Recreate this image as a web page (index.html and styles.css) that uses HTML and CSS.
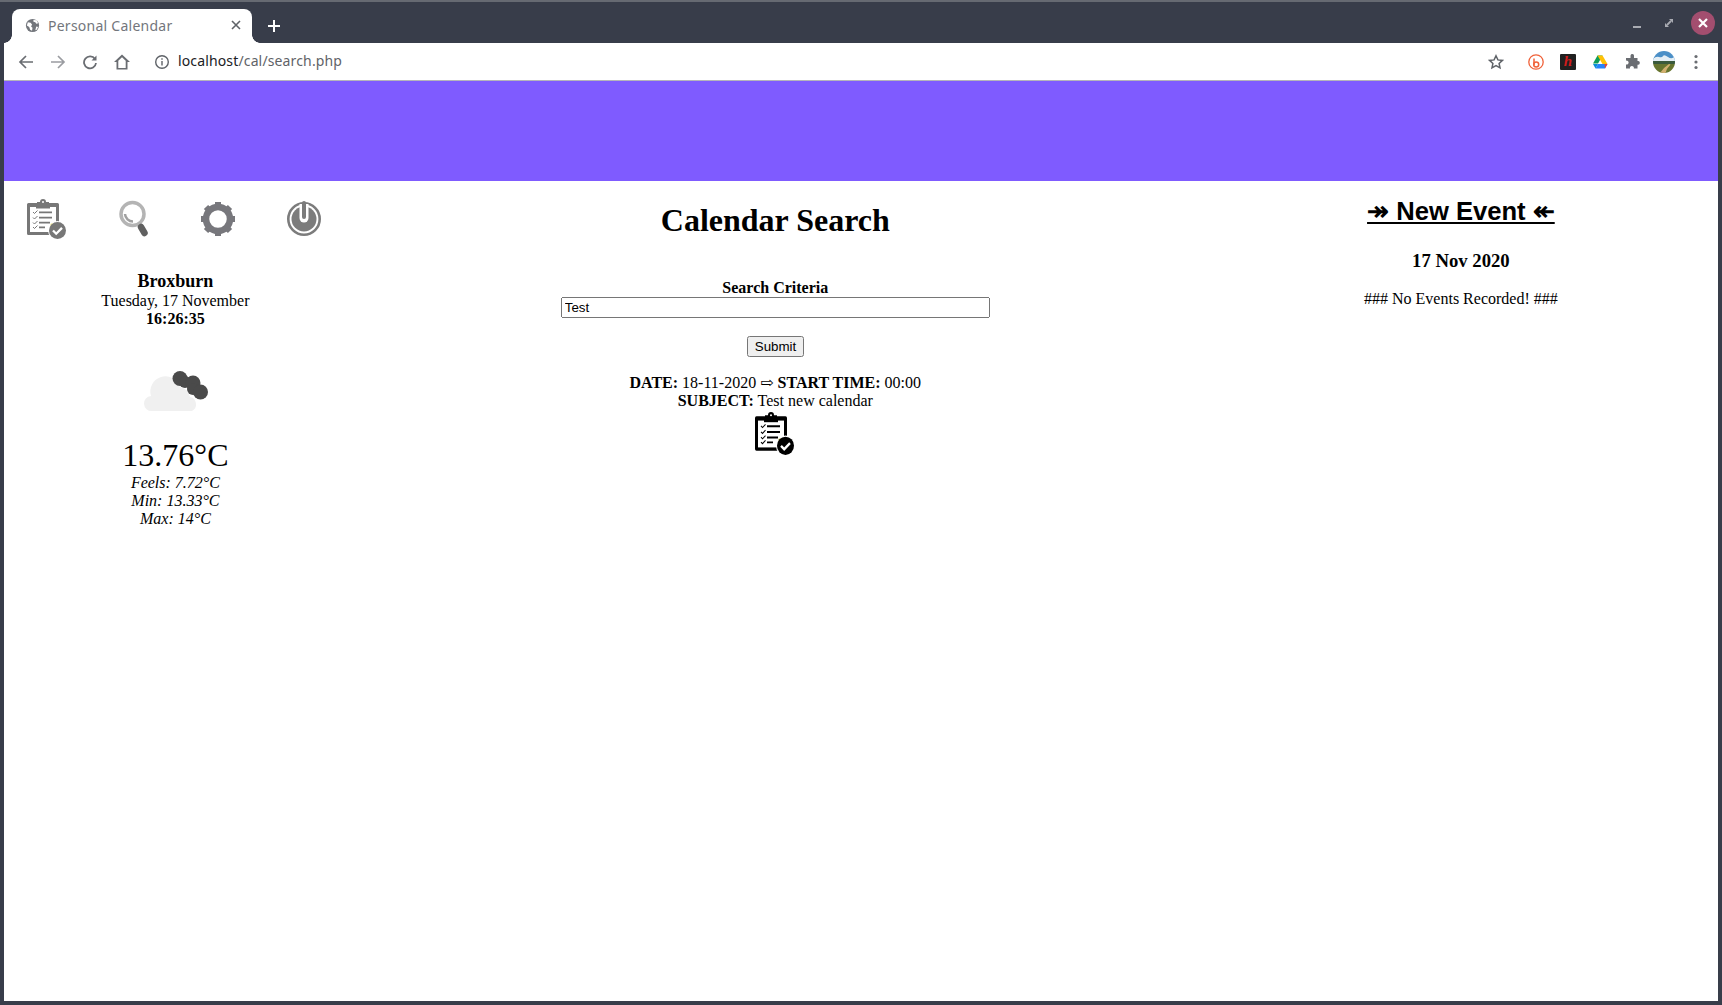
FILE: index.html
```html
<!DOCTYPE html>
<html lang="en">
<head>
  <meta charset="UTF-8" />
  <title>Personal Calendar</title>
  <link rel="stylesheet" href="styles.css">
</head>
<body>

<!-- clipboard icon, used in the left nav (grey) and in the result (black) -->
<svg class="sprite">
  <symbol id="clipboard" viewBox="0 0 40 41" preserveAspectRatio="none">
    <path d="M1.500 4H10V3h3a3 3 0 0 1 6 0h3v1h8.500A1.500 1.500 0 0 1 32 5.500v29a1.500 1.500 0 0 1-1.500 1.500h-29A1.500 1.500 0 0 1 0 34.500v-29A1.500 1.500 0 0 1 1.500 4z" fill="currentColor"/>
    <rect x="3" y="8" width="26" height="25" fill="#fff"/>
    <path d="M9 5h14v4.500H9z" fill="currentColor"/>
    <circle cx="16" cy="3" r="1" fill="#fff"/>
    <path d="M6 13l1.500 1.500 3-3M6 18.500l1.500 1.500 3-3M6 23.500l1.500 1.500 3-3M6 28l1.500 1.500 3-3" fill="none" stroke="currentColor"/>
    <path d="M12 13.300h13M12 18.700h13M12 23.700h11M12 28.300h6" stroke="currentColor" stroke-width="1.800"/>
    <circle cx="30.500" cy="31.500" r="9.500" fill="#fff"/>
    <circle cx="25" cy="26" r="1.800" fill="#f2eb9c"/>
    <circle cx="30.500" cy="31.500" r="8.500" fill="currentColor"/>
    <path d="M26 31.500l3.200 3.200 5.800-5.800" fill="none" stroke="#fff" stroke-width="2.300"/>
  </symbol>
</svg>

<div class="window">

  <div class="tabbar">
    <div class="tab">
      <svg class="favicon" viewBox="0 0 16 16"><circle cx="8" cy="8" r="7" fill="#73767c"/><path d="M3 4.500l3 .5 1.500 2-1 2 1.500 1.500-.5 3-2-1-1-3-2.500-1.500zM9 2l3.500.5 1.500 3-2 .5-1-1.500-2-.5zM12 9l2 .5-1.500 3-1.500.5z" fill="#fff"/></svg>
      <span class="tab-title">Personal Calendar</span>
      <svg class="tab-close" viewBox="0 0 10 10"><path d="M1 1l8 8M9 1l-8 8" stroke="#5f6368" stroke-width="1.600"/></svg>
    </div>
    <svg class="new-tab" viewBox="0 0 14 14"><path d="M7 1v12M1 7h12" stroke="#fff" stroke-width="2"/></svg>
    <div class="win-controls">
      <svg class="win-min" viewBox="0 0 8 2"><path d="M0 1h8" stroke="#a9abb2" stroke-width="2"/></svg>
      <svg class="win-max" viewBox="0 0 8 8"><path d="M4 0h4v4zM4 8H0V4z" fill="#a9abb2"/><path d="M2 6l4-4" stroke="#a9abb2" stroke-width="1.800"/></svg>
      <div class="win-close"><svg viewBox="0 0 10 10"><path d="M1 1l8 8M9 1l-8 8" stroke="#fff" stroke-width="2.200"/></svg></div>
    </div>
  </div>

  <div class="toolbar">
    <svg class="tool" viewBox="0 0 16 16"><path d="M15 8H2M8 2L2 8l6 6" fill="none" stroke="#6a6d72" stroke-width="1.700"/></svg>
    <svg class="tool" viewBox="0 0 16 16"><path d="M1 8h13M8 2l6 6-6 6" fill="none" stroke="#9a9ca1" stroke-width="1.700"/></svg>
    <svg class="tool" viewBox="0 0 16 16"><path d="M13 5A6 6 0 1 0 14 9" fill="none" stroke="#6a6d72" stroke-width="1.800"/><path d="M14.500 1.500v5h-5z" fill="#6a6d72"/></svg>
    <svg class="tool" viewBox="0 0 16 16"><path d="M8 .5L0 8h2.500v7.500h11V8H16zM4.300 14V6.800L8 3.200l3.700 3.600V14z" fill="#6a6d72" fill-rule="evenodd"/></svg>
    <svg class="info" viewBox="0 0 16 16"><circle cx="8" cy="8" r="6.300" fill="none" stroke="#5f6368" stroke-width="1.400"/><path d="M7.300 7h1.400v4.500H7.300zM7.300 4.300h1.400v1.400H7.300z" fill="#5f6368"/></svg>
    <div class="url"><span class="url-host">localhost</span>/cal/search.php</div>
    <svg class="ext star" viewBox="0 0 16 16"><path d="M8 1.800l1.900 4.100 4.500.5-3.300 3 .9 4.400L8 11.600l-4 2.200.9-4.400-3.300-3 4.500-.5z" fill="none" stroke="#5f6368" stroke-width="1.500"/></svg>
    <svg class="ext bitly" viewBox="0 0 16 16"><circle cx="8" cy="8" r="7.200" fill="none" stroke="#f0623a" stroke-width="1.300"/><path d="M6 4.500V11" stroke="#f0623a" stroke-width="1.500"/><circle cx="8.200" cy="10.500" r="2.500" fill="none" stroke="#f0623a" stroke-width="1.500"/></svg>
    <div class="ext hicon">h</div>
    <svg class="ext drive" viewBox="0 0 16 16"><path d="M5.500 1.500h5L6 9.500H1z" fill="#0f9d58"/><path d="M5.500 1.500h5l5 8.500h-5z" fill="#ffc107"/><path d="M3.500 14.500L6 10h9.500L13 14.500z" fill="#2684fc"/><path d="M13 14.500L15.500 10h-3z" fill="#ea4335"/><path d="M1 10h5l-2.500 4.500z" fill="#0b8cd9"/></svg>
    <svg class="ext puzzle" viewBox="0 0 16 16"><path d="M6.500 1.500a1.800 1.800 0 0 1 3.500 0V4h3.500v3a1.900 1.900 0 1 1 0 3.700V14.500H9.800a2 2 0 1 0-3.800 0H2v-4a2 2 0 1 0 0-3.800V4h4.500z" fill="#6a6d72"/></svg>
    <svg class="avatar" viewBox="0 0 22 22"><defs><clipPath id="round"><circle cx="11" cy="11" r="11"/></clipPath></defs><g clip-path="url(#round)"><rect width="22" height="11" fill="#4b8fc7"/><path d="M0 8q3-3 6-2t4-1 5 1 7-1v6H0z" fill="#e4eef5"/><rect y="10" width="22" height="3" fill="#3a5a3c"/><rect y="13" width="22" height="9" fill="#67752f"/><path d="M7 22q3-5 9-9l1.500.5q-4 4-5 8.500z" fill="#d2b06f"/></g></svg>
    <svg class="menu-dots" viewBox="0 0 4 16"><circle cx="2" cy="2.500" r="1.600" fill="#6a6d72"/><circle cx="2" cy="8" r="1.600" fill="#6a6d72"/><circle cx="2" cy="13.500" r="1.600" fill="#6a6d72"/></svg>
  </div>

  <div class="page">
    <header class="banner"></header>

    <main class="columns">

      <aside class="col-left">
        <nav class="icons">
          <svg class="nav-icon clip-grey"><use href="#clipboard"/></svg>
          <svg class="nav-icon" viewBox="0 0 40 40">
            <circle cx="19.500" cy="15" r="11.500" fill="none" stroke="#b4b4b4" stroke-width="3.500"/>
            <path d="M12 15a8 8 0 0 0 8 7.500" fill="none" stroke="#a0a0a0" stroke-width="2.500"/>
            <path d="M28 28l3.500 6" stroke="#606060" stroke-width="6.500" stroke-linecap="round"/>
          </svg>
          <svg class="nav-icon" viewBox="0 0 40 40">
            <circle cx="20" cy="20" r="12" fill="none" stroke="#77777c" stroke-width="6.500"/>
            <path d="M20 20L20 3M20 20L32 8M20 20L37 20M20 20L32 32M20 20L20 37M20 20L8 32M20 20L3 20M20 20L8 8" stroke="#77777c" stroke-width="6" stroke-dasharray="0 11 6 100" fill="none"/>
          </svg>
          <svg class="nav-icon" viewBox="0 0 40 40">
            <circle cx="20" cy="20" r="15.700" fill="none" stroke="#7c7c7c" stroke-width="2.600"/>
            <circle cx="20" cy="20" r="12.500" fill="#7c7c7c"/>
            <path d="M15.500 5h9v14a4.500 4.500 0 0 1-9 0z" fill="#fff"/>
            <path d="M20 4v14" stroke="#7c7c7c" stroke-width="4" stroke-linecap="round"/>
          </svg>
        </nav>

        <h3 class="town">Broxburn</h3>
        <div>Tuesday, 17 November</div>
        <div class="clock">16:26:35</div>

        <svg class="weather-icon" viewBox="0 0 66 41">
          <path d="M10 40a7.500 7.500 0 0 1-1-15 15 15 0 0 1 29-9 12 12 0 0 1 10 10 7.500 7.500 0 0 1 2 14z" fill="#f0f0f0"/>
          <g fill="#4a4a4a">
            <circle cx="38" cy="7.500" r="7.500"/>
            <circle cx="43" cy="11" r="6"/>
            <circle cx="51" cy="12" r="7.500"/>
            <circle cx="51" cy="18" r="6"/>
            <circle cx="58.500" cy="21" r="7.500"/>
          </g>
        </svg>

        <div class="temp">13.76°C</div>
        <div class="temp-more">Feels: 7.72°C</div>
        <div class="temp-more">Min: 13.33°C</div>
        <div class="temp-more">Max: 14°C</div>
      </aside>

      <section class="col-mid">
        <h1>Calendar Search</h1>
        <form class="search-form">
          <label class="search-label" for="criteria">Search Criteria</label>
          <input type="text" id="criteria" value="Test" />
          <button type="button">Submit</button>
        </form>
        <div class="result">
          <div><b>DATE:</b> 18-11-2020 ⇨ <b>START TIME:</b> 00:00</div>
          <div><b>SUBJECT:</b> Test new calendar</div>
          <svg class="result-icon"><use href="#clipboard"/></svg>
        </div>
      </section>

      <aside class="col-right">
        <a class="new-event" href="#">↠ New Event ↞</a>
        <h3 class="day">17 Nov 2020</h3>
        <p class="no-events">### No Events Recorded! ###</p>
      </aside>

    </main>
  </div>
</div>
</body>
</html>
```

FILE: styles.css
```css
* {
  box-sizing: border-box;
}

html, body {
  margin: 0;
  height: 100%;
  overflow: hidden;
}

body {
  font-family: "Liberation Serif", "DejaVu Serif", serif;
  font-size: 16px;
  color: #000;
  background: #383d4a;
}

.sprite {
  display: none;
}

.window {
  height: 1005px;
  display: flex;
  flex-direction: column;
  border-top: 2px solid #666a72;
  padding: 0 4px 4px;
}

/* browser chrome */
.tabbar {
  height: 41px;
  display: flex;
  align-items: flex-end;
  padding-left: 8px;
  flex: none;
}

.tab {
  position: relative;
  width: 240px;
  height: 34px;
  background: #fff;
  border-radius: 8px 8px 0 0;
  display: flex;
  align-items: center;
  padding: 0 11px 2px 13px;
  font-family: "Noto Sans", sans-serif;
  font-size: 14px;
  color: #73767c;
}

/* the little flares at the foot of the tab */
.tab::before,
.tab::after {
  content: '';
  position: absolute;
  bottom: 0;
  width: 8px;
  height: 8px;
}

.tab::before {
  left: -8px;
  background: radial-gradient(circle at 0 0, transparent 7.5px, #fff 8px);
}

.tab::after {
  right: -8px;
  background: radial-gradient(circle at 100% 0, transparent 7.5px, #fff 8px);
}

.favicon {
  width: 15px;
  height: 15px;
  margin-right: 8px;
}

.tab-title {
  flex: 1;
  letter-spacing: 0.25px;
}

.tab-close {
  width: 10px;
  height: 10px;
}

.new-tab {
  width: 14px;
  height: 14px;
  margin: 0 0 10px 15px;
}

.win-controls {
  margin-left: auto;
  align-self: stretch;
  display: flex;
  align-items: center;
  padding-right: 3px;
}

.win-min {
  width: 8px;
  height: 2px;
  margin: 8px 24px 0 0;
}

.win-max {
  width: 8px;
  height: 8px;
  margin-right: 18px;
}

.win-close {
  width: 24px;
  height: 24px;
  border-radius: 50%;
  background: #a34e6f;
  display: flex;
  align-items: center;
  justify-content: center;
}

.win-close svg {
  width: 10px;
  height: 10px;
}

.toolbar {
  height: 38px;
  background: #fff;
  border-bottom: 1px solid #b5b5bb;
  display: flex;
  align-items: center;
  padding-left: 14px;
  flex: none;
}

.tool {
  width: 16px;
  height: 16px;
  margin-right: 16px;
}

.info {
  width: 16px;
  height: 16px;
  margin: 0 8px;
}

.url {
  font-family: "Noto Sans", sans-serif;
  font-size: 14px;
  letter-spacing: 0.14px;
  color: #5f6368;
  margin-bottom: 2px;
}

.url-host {
  color: #202124;
}

.ext {
  width: 16px;
  height: 16px;
  margin-right: 16px;
}

.star {
  margin-left: auto;
  margin-right: 24px;
}

.hicon {
  background: #202020;
  color: #d01c1c;
  font-family: "Liberation Serif", serif;
  font-style: italic;
  font-weight: bold;
  font-size: 15px;
  line-height: 15px;
  text-align: center;
  border-radius: 1px;
}

.avatar {
  width: 22px;
  height: 22px;
  margin-right: 19px;
  margin-left: -3px;
}

.menu-dots {
  width: 4px;
  height: 16px;
  margin-right: 20px;
}

/* page */
.page {
  flex: 1;
  background: #fff;
  min-height: 0;
}

.banner {
  height: 100px;
  background: #7f5bff;
}

.columns {
  display: grid;
  grid-template-columns: 20% 50% 30%;
  text-align: center;
}

.col-left {
  padding-top: 18px;
}

.icons {
  display: flex;
  padding-left: 23px;
  gap: 45.5px;
  margin-bottom: 31px;
}

.nav-icon {
  width: 40px;
  height: 40px;
  flex: none;
}

.clip-grey {
  color: #777;
  height: 41px;
}

.town {
  margin: 0;
  font-size: 18px;
  line-height: 21px;
}

.col-left div {
  line-height: 18px;
}

.clock {
  font-weight: bold;
}

.weather-icon {
  display: block;
  width: 66px;
  height: 41px;
  margin: 43px auto 0;
}

.col-left .temp {
  font-size: 32px;
  line-height: 37px;
  margin-top: 25px;
}

.temp-more {
  font-style: italic;
}

.col-mid h1 {
  margin: 0;
  font-size: 32px;
  line-height: 37px;
  padding-top: 21px;
}

.search-form {
  display: flex;
  flex-direction: column;
  align-items: center;
  margin-top: 40px;
}

.search-label {
  font-weight: bold;
  line-height: 18px;
}

.search-form input {
  width: 429px;
  height: 21px;
  padding: 1px 2px;
  font-family: "Liberation Sans", sans-serif;
  font-size: 13.333px;
}

.search-form button {
  margin-top: 18px;
  height: 21px;
  width: 57px;
  padding: 1px 6px;
  font-family: "Liberation Sans", sans-serif;
  font-size: 13.333px;
}

.result {
  margin-top: 17px;
  line-height: 18px;
}

.result-icon {
  display: block;
  width: 40px;
  height: 44px;
  margin: 2px auto 0;
}

.new-event {
  display: inline-block;
  margin-top: 16px;
  font-family: "Liberation Sans", sans-serif;
  font-size: 25.6px;
  font-weight: bold;
  line-height: 29px;
  color: #000;
}

.day {
  margin: 24px 0 0;
  font-size: 18.72px;
  line-height: 22px;
}

.no-events {
  margin: 18px 0 0;
  line-height: 18px;
}
```
